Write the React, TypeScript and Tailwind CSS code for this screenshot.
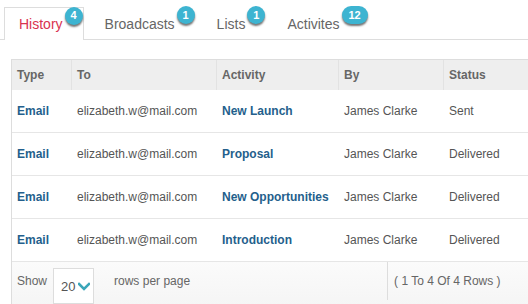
import React from "react";

const tabs = [
  { label: "History", badge: "4", active: true },
  { label: "Broadcasts", badge: "1" },
  { label: "Lists", badge: "1" },
  { label: "Activites", badge: "12" },
];

const rows = [
  { activity: "New Launch", status: "Sent" },
  { activity: "Proposal", status: "Delivered" },
  { activity: "New Opportunities", status: "Delivered" },
  { activity: "Introduction", status: "Delivered" },
];

function Badge({ text }: { text: string }) {
  const wide = text.length > 1;
  return (
    <span
      className={`ml-[2px] -mt-[17px] inline-flex h-[18px] items-center justify-center rounded-full bg-[#3db4d1] text-[11px] font-bold leading-none text-white shadow-[0_2px_2px_rgba(0,0,0,0.55)] ${
        wide ? "w-[26px]" : "w-[18px]"
      }`}
    >
      {text}
    </span>
  );
}

export default function App() {
  return (
    <div
      className="h-[304px] w-[528px] overflow-hidden bg-white"
      style={{ fontFamily: '"Liberation Sans", Arial, sans-serif' }}
    >
      <div className="flex h-[40px] items-end border-b border-[#dddddd] pl-[4px]">
        {tabs.map((t) => (
          <div
            key={t.label}
            className={`-mb-px mr-[6px] flex h-[33px] items-center pl-[14px] pr-0 text-[14px] ${
              t.active
                ? "border border-b-0 border-[#dddddd] bg-white text-[#d9334f]"
                : "border border-transparent text-[#666666]"
            }`}
          >
            <span className="leading-[20px]">{t.label}</span>
            <Badge text={t.badge} />
          </div>
        ))}
      </div>

      <div className="ml-[11px] mt-[19px] w-[540px] border-l border-t border-[#dddddd] text-[12px]">
        <div className="grid h-[30px] grid-cols-[60px_145px_122px_105px_1fr] bg-[#eeeeee] font-bold text-[#666666]">
          <div className="flex items-center border-r border-[#e2e2e2] px-[5px]">Type</div>
          <div className="flex items-center border-r border-[#e2e2e2] px-[5px]">To</div>
          <div className="flex items-center border-r border-[#e2e2e2] px-[5px]">Activity</div>
          <div className="flex items-center border-r border-[#e2e2e2] px-[5px]">By</div>
          <div className="flex items-center px-[5px]">Status</div>
        </div>
        {rows.map((r) => (
          <div
            key={r.activity}
            className="grid h-[43px] grid-cols-[60px_145px_122px_105px_1fr] border-b border-[#e6e6e6] text-[#555555]"
          >
            <div className="flex items-center px-[5px] font-bold text-[#245f8c]">Email</div>
            <div className="flex items-center px-[5px]">elizabeth.w@mail.com</div>
            <div className="flex items-center px-[5px] font-bold text-[#245f8c]">{r.activity}</div>
            <div className="flex items-center px-[5px]">James Clarke</div>
            <div className="flex items-center px-[5px]">{r.status}</div>
          </div>
        ))}
        <div className="flex h-[44px] items-start bg-gradient-to-b from-[#fbfbfb] to-[#f5f5f5] text-[12px] text-[#666666]">
          <div className="flex h-[38px] items-center pl-[5px]">Show</div>
          <div className="ml-[6px] mt-[6px] flex h-[36px] w-[41px] items-center border border-[#dddddd] bg-white pl-[7px] text-[13px] text-[#555555]">
            <span className="mt-[2px]">20</span>
            <svg width="12" height="9" viewBox="0 0 12 9" className="ml-[2px]">
              <path d="M1 2 L6 7 L11 2" fill="none" stroke="#3aa6b9" strokeWidth="2.6" strokeLinecap="square" />
            </svg>
          </div>
          <div className="ml-[20px] flex h-[38px] items-center">rows per page</div>
          <div className="ml-[197px] h-[38px] border-l border-[#dddddd]" />
          <div className="ml-[6px] flex h-[38px] items-center">( 1 To 4 Of 4 Rows )</div>
        </div>
      </div>
    </div>
  );
}
